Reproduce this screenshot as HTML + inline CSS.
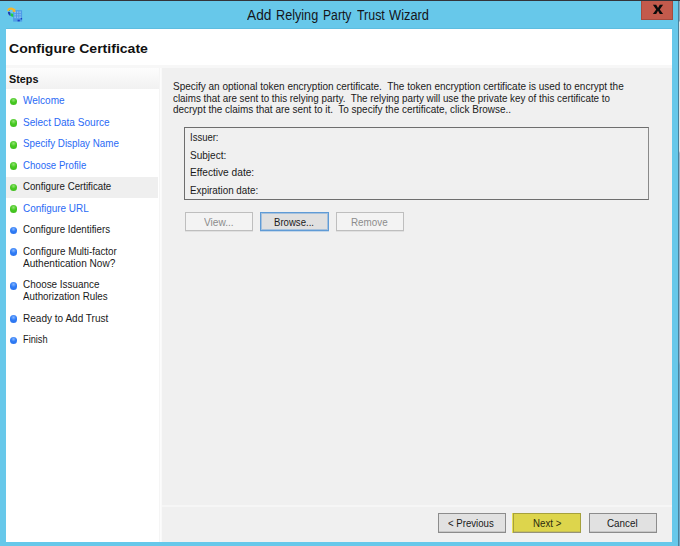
<!DOCTYPE html>
<html lang="en">
<head>
<meta charset="utf-8">
<title>Add Relying Party Trust Wizard</title>
<style>
*{box-sizing:border-box;margin:0;padding:0}
html,body{width:680px;height:546px;overflow:hidden;background:#67c8ea}
body{position:relative;font-family:"Liberation Sans",Arial,sans-serif;font-size:11px;line-height:14px;color:#1a1a1a}
button{font:inherit;color:inherit;border-radius:0;outline:0;-webkit-appearance:none;appearance:none}
h1,h2{font-weight:bold;font-size:11px}
ol{list-style:none}
#window{position:absolute;left:0;top:0;width:680px;height:546px;background:#67c8ea;overflow:hidden;
  border-top:1px solid #33333a}
#window::before,#window::after{content:"";position:absolute;top:0;width:1px;height:545px}
#window::before{left:678px;background:#4a829c}
#window::after{left:679px;background:linear-gradient(#8ea6bd 0,#8ea6bd 20px,#e6e6e8 21px,#e6e6e8 150px,#a3b5cb 152px,#9db1c9 360px,#6fa9c8 364px,#6fa9c8 100%)}
#titlebar,#client,#pagehead,#steps,#content,#cert,#close,#appicon,.t,.btn,.dot,#steps li,#steps ol,#intro,#wizardnav,#certactions{position:absolute}
.t{white-space:pre;line-height:14px;height:14px;transform-origin:0 50%}
#titlebar{left:0;top:-1px;width:680px;height:29px}
#titlebar::after{content:"";position:absolute;left:6px;top:28px;width:666px;height:1px;background:#5dbde0}
#appicon{left:6px;top:6px}
#title{position:absolute;left:0;top:0;width:680px;height:29px;font-size:14px;color:#15151a}
#title .t{line-height:18px;height:18px}
#close{left:641px;top:1px;width:32px;height:19px;background:#c35a4c;border:solid #a54b3f;border-width:0 1px 1px 1px}
#close svg{position:absolute;left:-1px;top:0}
#client{left:6px;top:28px;width:666px;height:513px;background:#fff}
#pagehead{left:0;top:0;width:666px;height:39px;border-bottom:3px solid #f7f7f7}
h1.t{font-size:13.5px;line-height:18px;height:18px;color:#111}
#steps{left:0;top:39px;width:153px;height:474px;background:linear-gradient(#fdfdfd,#f1f1f1) 0 0/153px 21px no-repeat #fff}
#steps h2{color:#111}
#steps ol{left:0;top:0;width:153px;height:474px}
#steps li{left:0;width:152px}
#steps li.done{color:#2a6af5}
#steps li.cur{color:#1a1a1a;background:#efefef}
.dot{left:3.5px;width:7.8px;height:7.8px;border-radius:50%;
  background:radial-gradient(circle at 50% 30%,#86b6ff 0,#2f7cf6 42%,#2a70ea 100%)}
.done .dot{background:radial-gradient(circle at 50% 30%,#93e274 0,#47c922 42%,#3dba1c 100%)}
#content{left:156px;top:39px;width:510px;height:474px;background:#f0f0f0;box-shadow:-1px 0 0 #f9f9f9,-2px 0 0 #fcfcfc,-3px 0 0 #f5f5f5}
#intro,#certactions,#wizardnav{left:0;top:0;width:510px;height:0}
#wizardnav::before{content:"";position:absolute;left:0;top:437px;width:510px;height:2px;background:#f6f6f6}
#cert{left:22px;top:59px;width:465px;height:73px;border:1px solid #6e6e6e;border-right-color:#8a8a8a}
.btn{border:1px solid #8c8c8c;background:#e1e1e1;box-shadow:inset 0 -1px 0 rgba(140,140,140,.3)}
.btn.dis{border-color:#bebebe;background:#f3f3f3;color:#8c8c8c;box-shadow:0 1px 0 rgba(190,190,190,.3)}
.btn.def{border-color:#5f9bd6;background:#e0e0e0;box-shadow:inset 0 0 0 1px rgba(95,155,214,.45),0 1px 0 rgba(95,155,214,.3)}
.btn.hl{color:#2b2b0e;border-color:#a6a13c;border-bottom-color:#95927a;background:#ddd54c;box-shadow:-1px 0 0 #e8df55,inset 0 -1px 0 rgba(150,146,100,.3)}
</style>
</head>
<body>
<div id="window">
  <div id="titlebar">
    <svg id="appicon" width="18" height="17" viewBox="6 6 18 17" aria-hidden="true">
      <rect x="13.1" y="10.2" width="9" height="11.4" fill="#4a94e6" opacity=".85"/>
      <rect x="14.3" y="11.4" width="6.6" height="6.8" fill="#9ccdf6" opacity=".7"/>
      <path d="M14.2 13.6h6.8M14.2 15.9h6.8M16.5 11.2v7M18.8 11.2v7" stroke="#4a94e6" stroke-width=".8" fill="none"/>
      <rect x="17.6" y="19.7" width="2.2" height="1.7" fill="#1a3fc4"/>
      <rect x="20.7" y="18" width="1.4" height="1.5" fill="#1a3fc4"/>
      <path d="M7.9 12.2c.8-.8 2-.5 2.4.4l.4 3.5c-1.7-.7-2.8-2.1-2.8-3.9z" fill="#1c3fb6"/>
      <path d="M10.4 13.3l2.7.5.2 3.2-2.3-.8z" fill="#1fcf47"/>
      <path d="M9.1 9.6l1 .1-.2 1.2-.9-.3z" fill="#35c040"/>
      <path d="M7.2 10.8C7.4 8.6 9.3 7.4 11.4 7.6c1.3.1 2.4.7 3.1 1.5l.8-.7.1 3.5c-1 .4-2.3.2-3-.6l.6-.9c-1.3-1.1-3.4-1-4.5.5z" fill="#f6b52a"/>
    </svg>
    <div id="title"><span class="t" style="left:246.8px;top:6px;transform:scaleX(0.9791)">Add</span> <span class="t" style="left:275.8px;top:6px;transform:scaleX(0.9036)">Relying</span> <span class="t" style="left:322.7px;top:6px;transform:scaleX(0.8688)">Party</span> <span class="t" style="left:356.8px;top:6px;transform:scaleX(0.8861)">Trust</span> <span class="t" style="left:389.3px;top:6px;transform:scaleX(0.9182)">Wizard</span></div>
    <button id="close" type="button" aria-label="Close"><svg width="32" height="19" viewBox="0 0 32 19" aria-hidden="true"><path d="M11.9 3.8h3.3l1.8 3.3 1.8-3.3h3.3l-3.3 4.6 3.3 4.6h-3.3l-1.8-3.3-1.8 3.3h-3.3l3.3-4.6z" fill="#0b0b0b"/></svg></button>
  </div>
  <div id="client">
    <header id="pagehead"><h1 class="t" style="left:3.1px;top:11px;transform:scaleX(1.0402)">Configure Certificate</h1></header>
    <nav id="steps">
      <h2 class="t" style="left:3.1px;top:4px;transform:scaleX(0.9810)">Steps</h2>
      <ol>
        <li class="done" style="top:23px;height:21px"><i class="dot" style="top:6.6px"></i><span class="t" style="left:17.4px;top:2px;transform:scaleX(0.9112)">Welcome</span></li>
        <li class="done" style="top:45px;height:21px"><i class="dot" style="top:6.2px"></i><span class="t" style="left:17.4px;top:2px;transform:scaleX(0.9137)">Select Data Source</span></li>
        <li class="done" style="top:66px;height:21px"><i class="dot" style="top:6.8px"></i><span class="t" style="left:17.4px;top:2px;transform:scaleX(0.8909)">Specify Display Name</span></li>
        <li class="done" style="top:88px;height:21px"><i class="dot" style="top:6.2px"></i><span class="t" style="left:17px;top:2px;transform:scaleX(0.8766)">Choose Profile</span></li>
        <li class="done cur" style="top:109px;height:21px"><i class="dot" style="top:6.6px"></i><span class="t" style="left:17px;top:2px;transform:scaleX(0.8800)">Configure Certificate</span></li>
        <li class="done" style="top:131px;height:21px"><i class="dot" style="top:6.2px"></i><span class="t" style="left:17px;top:2px;transform:scaleX(0.9036)">Configure URL</span></li>
        <li class="todo" style="top:152px;height:21px"><i class="dot" style="top:6.7px"></i><span class="t" style="left:17px;top:2px;transform:scaleX(0.8837)">Configure Identifiers</span></li>
        <li class="todo" style="top:174px;height:33px"><i class="dot" style="top:6.4px"></i><span class="t" style="left:17px;top:2px;transform:scaleX(0.8915)">Configure Multi-factor</span> <span class="t" style="left:17.4px;top:14px;transform:scaleX(0.9152)">Authentication Now?</span></li>
        <li class="todo" style="top:207px;height:33px"><i class="dot" style="top:7.0px"></i><span class="t" style="left:17px;top:2px;transform:scaleX(0.9000)">Choose Issuance</span> <span class="t" style="left:17.4px;top:14px;transform:scaleX(0.8869)">Authorization Rules</span></li>
        <li class="todo" style="top:241px;height:21px"><i class="dot" style="top:6.2px"></i><span class="t" style="left:17.4px;top:2px;transform:scaleX(0.9122)">Ready to Add Trust</span></li>
        <li class="todo" style="top:262px;height:21px"><i class="dot" style="top:6.7px"></i><span class="t" style="left:17.4px;top:2px;transform:scaleX(0.8383)">Finish</span></li>
      </ol>
    </nav>
    <main id="content">
      <p id="intro">
        <span class="t" style="left:11px;top:11px;transform:scaleX(0.9082)">Specify an optional token encryption certificate.  The token encryption certificate is used to encrypt the</span>
        <span class="t" style="left:11px;top:23px;transform:scaleX(0.8931)">claims that are sent to this relying party.  The relying party will use the private key of this certificate to</span>
        <span class="t" style="left:11px;top:34px;transform:scaleX(0.9053)">decrypt the claims that are sent to it.  To specify the certificate, click Browse..</span>
      </p>
      <div id="cert">
        <div class="t" style="left:5.3px;top:2px;transform:scaleX(0.8632)">Issuer:</div>
        <div class="t" style="left:5.3px;top:20px;transform:scaleX(0.9132)">Subject:</div>
        <div class="t" style="left:5.3px;top:37px;transform:scaleX(0.9235)">Effective date:</div>
        <div class="t" style="left:5.3px;top:55px;transform:scaleX(0.8922)">Expiration date:</div>
      </div>
      <div id="certactions">
        <button type="button" class="btn dis" style="left:23px;top:144px;width:68px;height:19px" disabled><span class="t" style="left:17.5px;top:2px;transform:scaleX(0.9218)">View...</span></button>
        <button type="button" class="btn def" style="left:98px;top:144px;width:69px;height:19px"><span class="t" style="left:12.8px;top:2px;transform:scaleX(0.8722)">Browse...</span></button>
        <button type="button" class="btn dis" style="left:174px;top:144px;width:68px;height:19px" disabled><span class="t" style="left:14.2px;top:2px;transform:scaleX(0.8958)">Remove</span></button>
      </div>
      <footer id="wizardnav">
        <button type="button" class="btn" style="left:276px;top:445px;width:68px;height:20px"><span class="t" style="left:9.2px;top:2px;transform:scaleX(0.8760)">&lt; Previous</span></button>
        <button type="button" class="btn hl" style="left:351px;top:445px;width:68px;height:20px"><span class="t" style="left:19.2px;top:2px;transform:scaleX(0.8814)">Next &gt;</span></button>
        <button type="button" class="btn" style="left:427px;top:445px;width:68px;height:20px"><span class="t" style="left:17px;top:2px;transform:scaleX(0.8964)">Cancel</span></button>
      </footer>
    </main>
  </div>
</div>
</body>
</html>
